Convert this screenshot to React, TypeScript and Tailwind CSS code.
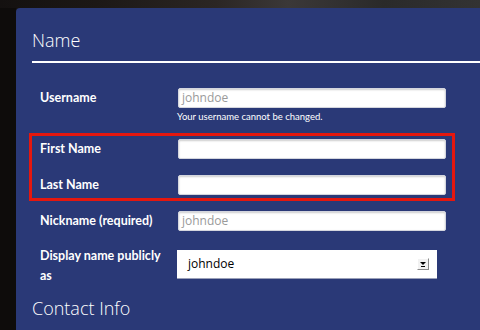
import React from "react";

const font = { fontFamily: '"Open Sans", "Liberation Sans", sans-serif' };
const labelFont = { fontFamily: 'Lato, "Open Sans", "Liberation Sans", sans-serif' };

function TextInput({ placeholder }: { placeholder?: string }) {
  return (
    <div className="w-[268px] h-[20px] bg-white rounded-[2px] shadow-[inset_0_1px_2px_rgba(0,0,0,0.2)] border border-[#d4d6de] flex items-center pl-[3px]">
      {placeholder ? (
        <span className="text-[12px] leading-none text-[#9a9a9a]">{placeholder}</span>
      ) : null}
    </div>
  );
}

function Label({ children }: { children: React.ReactNode }) {
  return (
    <div style={labelFont} className="w-[146px] pl-[8px] text-[12.5px] font-bold text-white leading-[20px]">
      {children}
    </div>
  );
}

export default function App() {
  return (
    <div
      style={font}
      className="w-[480px] h-[330px] overflow-hidden flex flex-col bg-[linear-gradient(90deg,#141110_0%,#1c1816_20%,#2b2624_45%,#3b3838_60%,#2a2a2a_80%,#333_100%)]"
    >
      <div className="h-[8px] shrink-0" />
      <div className="flex flex-1 min-h-0">
        <div className="w-[16px] shrink-0 bg-[#0e0c0b]" />
        <div className="flex-1 bg-[#2a3977] rounded-tl-[4px] pl-[16px] pt-[20px] flex flex-col">
          <div className="text-[18px] leading-[24px] text-white font-light">Name</div>
          <div className="mt-[9px] h-[2px] bg-white" />

          <div className="mt-[25px] flex items-center">
            <Label>Username</Label>
            <TextInput placeholder="johndoe" />
          </div>
          <div style={labelFont} className="pl-[145px] mt-[3px] text-[9.5px] leading-[12px] text-white">
            Your username cannot be changed.
          </div>

          <div className="mt-[10px] -ml-[3px] w-[426px] border-[3px] border-[#e5170e] pt-[3px] pb-[3px] flex flex-col gap-[16px]">
            <div className="flex items-center">
              <Label>First Name</Label>
              <TextInput />
            </div>
            <div className="flex items-center">
              <Label>Last Name</Label>
              <TextInput />
            </div>
          </div>

          <div className="mt-[10px] flex items-center">
            <Label>Nickname (required)</Label>
            <TextInput placeholder="johndoe" />
          </div>

          <div className="mt-[19px] h-[29px] flex items-start">
            <div style={labelFont} className="w-[145px] pl-[8px] pr-[4px] text-[12.5px] font-bold text-white leading-[20px] -mt-[4px]">
              <span className="whitespace-nowrap">Display name publicly</span> as
            </div>
            <div className="w-[260px] h-[29px] bg-white border-b border-[#9aa0b8] flex items-center justify-between pl-[11px] pr-[8px]">
              <span className="text-[12px] text-black leading-none">johndoe</span>
              <div className="w-[12px] h-[12px] bg-[#f2f2f2] border-r border-b border-[#8a8a8a] border-t border-l border-t-white border-l-white flex items-center justify-center">
                <svg width="6" height="5" viewBox="0 0 6 5">
                  <path d="M0 0 L6 0 L3 3 Z" fill="#000" />
                  <rect x="1" y="4" width="4" height="1" fill="#000" />
                </svg>
              </div>
            </div>
          </div>

          <div className="mt-[17px] text-[18px] leading-[24px] text-white font-light">Contact Info</div>
        </div>
      </div>
    </div>
  );
}
